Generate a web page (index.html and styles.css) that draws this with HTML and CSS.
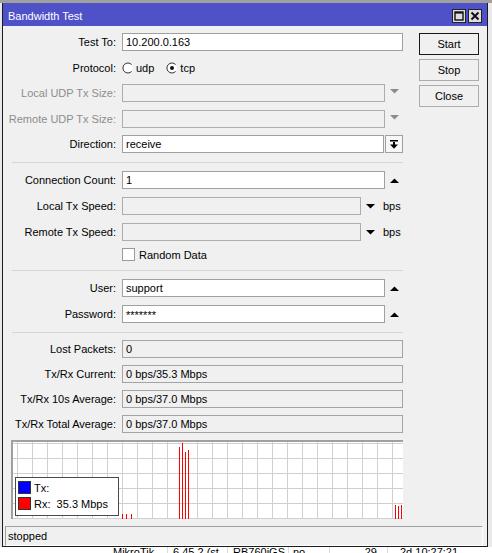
FILE: index.html
```html
<!DOCTYPE html>
<html>
<head>
<meta charset="utf-8">
<title>Bandwidth Test</title>
<link rel="stylesheet" href="styles.css">
</head>
<body>
<div class="screen">
  <div class="win">
    <div class="titlebar">
      <span class="title">Bandwidth Test</span>
      <div class="tbtns">
        <span class="tbtn"><svg width="12" height="12" viewBox="0 0 12 12"><rect x="2" y="2" width="8" height="8" fill="none" stroke="#111" stroke-width="1.4"/><rect x="2" y="2" width="8" height="1.6" fill="#111"/></svg></span>
        <span class="tbtn"><svg width="12" height="12" viewBox="0 0 12 12"><path d="M2.5 2.5 L9.5 9.5 M9.5 2.5 L2.5 9.5" stroke="#111" stroke-width="2"/></svg></span>
      </div>
    </div>
    <div class="body">
      <div class="main">
        <div class="form">
          <div class="row">
            <span class="lbl">Test To:</span>
            <span class="fld w281">10.200.0.163</span>
          </div>
          <div class="row g8">
            <span class="lbl">Protocol:</span>
            <span class="radio"><svg width="12" height="12" viewBox="0 0 12 12"><circle cx="6" cy="6" r="5" fill="#fff"/><path d="M9.6 2.6 A5 5 0 1 0 9.6 9.4" fill="none" stroke="#333" stroke-width="1"/></svg>udp</span>
            <span class="radio"><svg width="12" height="12" viewBox="0 0 12 12"><circle cx="6" cy="6" r="5" fill="#fff"/><path d="M9.6 2.6 A5 5 0 1 0 9.6 9.4" fill="none" stroke="#333" stroke-width="1"/><circle cx="6" cy="6" r="2" fill="#111"/></svg>tcp</span>
          </div>
          <div class="row g7">
            <span class="lbl dis">Local UDP Tx Size:</span>
            <span class="fld off w263"></span>
            <span class="slot up2"><svg width="9" height="5" viewBox="0 0 9 5"><path d="M0 0 L9 0 L4.5 4.5Z" fill="#8c8c8c"/></svg></span>
          </div>
          <div class="row g8">
            <span class="lbl dis">Remote UDP Tx Size:</span>
            <span class="fld off w263"></span>
            <span class="slot up2"><svg width="9" height="5" viewBox="0 0 9 5"><path d="M0 0 L9 0 L4.5 4.5Z" fill="#8c8c8c"/></svg></span>
          </div>
          <div class="row g7">
            <span class="lbl">Direction:</span>
            <span class="fld w262">receive</span>
            <span class="dbtn"><svg width="8" height="9" viewBox="0 0 8 9"><rect x="0" y="0" width="8" height="1.5" fill="#000"/><rect x="3" y="2" width="2" height="3" fill="#000"/><path d="M0 4.5 L8 4.5 L4 8.8Z" fill="#000"/></svg></span>
          </div>
          <div class="sep"></div>
          <div class="row">
            <span class="lbl">Connection Count:</span>
            <span class="fld w263">1</span>
            <span class="slot"><svg width="9" height="5" viewBox="0 0 9 5"><path d="M0 5 L9 5 L4.5 0.5Z" fill="#000"/></svg></span>
          </div>
          <div class="row g8">
            <span class="lbl">Local Tx Speed:</span>
            <span class="fld off w239"></span>
            <span class="slot s19"><svg width="9" height="5" viewBox="0 0 9 5"><path d="M0 0 L9 0 L4.5 4.5Z" fill="#000"/></svg></span>
            <span class="unit">bps</span>
          </div>
          <div class="row g8">
            <span class="lbl">Remote Tx Speed:</span>
            <span class="fld off w239"></span>
            <span class="slot s19"><svg width="9" height="5" viewBox="0 0 9 5"><path d="M0 0 L9 0 L4.5 4.5Z" fill="#000"/></svg></span>
            <span class="unit">bps</span>
          </div>
          <div class="row chkrow g7">
            <span class="lbl"></span>
            <span class="chk"></span>
            <span class="chktxt">Random Data</span>
          </div>
          <div class="sep"></div>
          <div class="row">
            <span class="lbl">User:</span>
            <span class="fld w263">support</span>
            <span class="slot"><svg width="9" height="5" viewBox="0 0 9 5"><path d="M0 5 L9 5 L4.5 0.5Z" fill="#000"/></svg></span>
          </div>
          <div class="row g8">
            <span class="lbl">Password:</span>
            <span class="fld w263 pw">*******</span>
            <span class="slot"><svg width="9" height="5" viewBox="0 0 9 5"><path d="M0 5 L9 5 L4.5 0.5Z" fill="#000"/></svg></span>
          </div>
          <div class="sep sep-b"></div>
          <div class="row">
            <span class="lbl">Lost Packets:</span>
            <span class="fld ro w281">0</span>
          </div>
          <div class="row g7">
            <span class="lbl">Tx/Rx Current:</span>
            <span class="fld ro w281">0 bps/35.3 Mbps</span>
          </div>
          <div class="row g7">
            <span class="lbl">Tx/Rx 10s Average:</span>
            <span class="fld ro w281">0 bps/37.0 Mbps</span>
          </div>
          <div class="row g7">
            <span class="lbl">Tx/Rx Total Average:</span>
            <span class="fld ro w281">0 bps/37.0 Mbps</span>
          </div>
        </div>
        <div class="btns">
          <span class="btn default">Start</span>
          <span class="btn">Stop</span>
          <span class="btn">Close</span>
        </div>
      </div>
      <div class="graph">
        <svg class="plot" width="390" height="77" viewBox="0 0 390 77">
          <g stroke="#d0d0d0" stroke-width="1">
            <path d="M4.5 0V77 M19.5 0V77 M34.5 0V77 M49.5 0V77 M64.5 0V77 M79.5 0V77 M94.5 0V77 M109.5 0V77 M124.5 0V77 M139.5 0V77 M154.5 0V77 M169.5 0V77 M184.5 0V77 M199.5 0V77 M214.5 0V77 M229.5 0V77 M244.5 0V77 M259.5 0V77 M274.5 0V77 M289.5 0V77 M304.5 0V77 M319.5 0V77 M334.5 0V77 M349.5 0V77 M364.5 0V77 M379.5 0V77"/>
            <path d="M0 1.5H390 M0 16.5H390 M0 31.5H390 M0 46.5H390 M0 61.5H390 M0 76.5H390"/>
          </g>
          <g stroke="#ff0000" stroke-width="1">
            <path d="M109.5 72V77 M113.5 72V77 M118.5 72V77"/>
            <path d="M166.5 5V77 M169.5 1V77 M172.5 10V77 M175.5 8V77"/>
            <path d="M382.5 63V77 M385.5 64V77 M388.5 63V77"/>
          </g>
        </svg>
        <div class="legend">
          <div class="lrow"><span class="sw blue"></span><span>Tx:</span></div>
          <div class="lrow"><span class="sw red"></span><span class="pre">Rx:  35.3 Mbps</span></div>
        </div>
      </div>
      <div class="status">stopped</div>
    </div>
  </div>
  <div class="bgrow">
    <span class="cell c0">MikroTik</span>
    <span class="cell c1">6.45.2 (st</span>
    <span class="cell c2">RB760iGS</span>
    <span class="cell c3">no</span>
    <span class="cell c4">29</span>
    <span class="cell c5">2d 10:27:21</span>
  </div>
</div>
</body>
</html>
```

FILE: styles.css
```css
* { box-sizing: border-box; }
html, body { margin: 0; padding: 0; }
body {
  width: 492px;
  height: 553px;
  overflow: hidden;
  background: #ececec;
  font-family: "Liberation Sans", Arial, sans-serif;
  font-size: 11px;
  color: #000;
}
.screen {
  height: 553px;
  padding-top: 3px;
  background: linear-gradient(to bottom, #a0a0a0 0, #a0a0a0 3px, #e9e9e9 3px);
}
.win {
  margin-left: 2px;
  width: 486px;
  border: 1px solid #1c1c1c;
  border-top: 0;
  background: #f0f0f0;
}
.titlebar {
  height: 23px;
  background: #4f51c9;
  color: #fff;
  display: flex;
  align-items: flex-start;
  padding: 0 5px 0 5px;
}
.title {
  font-size: 11px;
  line-height: 13px;
  margin-top: 7px;
}
.tbtns {
  margin-left: auto;
  margin-top: 6px;
  display: flex;
  gap: 2px;
}
.tbtn {
  width: 14px;
  height: 14px;
  border: 1px solid #222;
  background: #dedede;
  display: flex;
  align-items: center;
  justify-content: center;
}
.body {
  padding: 7px 0 0 0;
}
.main { display: flex; }
.form { width: 400px; flex: none; }
.row {
  display: flex;
  align-items: center;
  height: 18px;
}
.g7 { margin-top: 7px; }
.g8 { margin-top: 8px; }
.lbl {
  width: 113px;
  margin-right: 6px;
  text-align: right;
  white-space: nowrap;
  flex: none;
}
.dis { color: #8d8d8d; }
.fld {
  height: 18px;
  border: 1px solid #a0a0a0;
  background: #fff;
  padding: 0 3px;
  display: flex;
  align-items: center;
  flex: none;
  white-space: nowrap;
}
.w281 { width: 281px; }
.w263 { width: 263px; }
.w262 { width: 262px; }
.w239 { width: 239px; }
.off { background: #f0f0f0; border-color: #adadad; }
.ro { background: #f0f0f0; border-color: #a4a4a4; }
.pw { padding-left: 3px; padding-top: 2px; }
.slot {
  width: 18px;
  height: 18px;
  display: flex;
  align-items: center;
  justify-content: center;
  flex: none;
}
.slot svg { display: block; }
.up2 svg { margin-bottom: 4px; }
.s19 { width: 19px; }
.unit { margin-left: 3px; }
.dbtn {
  margin-left: 1px;
  width: 18px;
  height: 18px;
  border: 1px solid #a0a0a0;
  background: #f7f7f7;
  display: flex;
  align-items: center;
  justify-content: center;
  flex: none;
}
.dbtn svg { display: block; }
.radio {
  display: flex;
  align-items: center;
  gap: 2px;
  margin-right: 12px;
}
.radio svg { display: block; }
.chkrow { height: 13px; }
.chk {
  width: 13px;
  height: 13px;
  border: 1px solid #9a9a9a;
  background: #fff;
  flex: none;
}
.chktxt { margin-left: 4px; }
.sep {
  height: 1px;
  background: #d6d6d6;
  margin: 9px 0 8px 9px;
  width: 391px;
}
.sep-b { margin-bottom: 7px; }
.btns {
  margin-left: 16px;
  width: 60px;
  display: flex;
  flex-direction: column;
  gap: 4px;
  flex: none;
}
.btn {
  height: 22px;
  border: 1px solid #adadad;
  background: #f0f0f0;
  display: flex;
  align-items: center;
  justify-content: center;
}
.btn.default { border-color: #1a1a1a; }
.graph {
  position: relative;
  margin: 7px 0 0 8px;
  width: 392px;
  height: 79px;
  border-top: 2px solid #a0a0a0;
  border-left: 2px solid #a0a0a0;
  background: #fff;
}
.plot { display: block; }
.legend {
  position: absolute;
  left: 2px;
  top: 35px;
  width: 104px;
  height: 39px;
  border: 1px solid #4a4a4a;
  background: #fff;
  padding: 3px 2px;
  display: flex;
  flex-direction: column;
  gap: 3px;
}
.lrow {
  display: flex;
  align-items: center;
  height: 13px;
  gap: 3px;
}
.sw {
  width: 13px;
  height: 13px;
  border: 1px solid #333;
  flex: none;
}
.blue { background: #0000ff; }
.red { background: #ff0000; }
.pre { white-space: pre; }
.status {
  margin: 7px 0 0 2px;
  width: 478px;
  height: 20px;
  border: 1px solid;
  border-color: #a0a0a0 #fff #fff #a0a0a0;
  padding-left: 2px;
  display: flex;
  align-items: center;
}
.bgrow {
  display: flex;
  height: 7px;
  overflow: hidden;
  background: #fff;
}
.cell {
  flex: none;
  line-height: 13px;
  margin-top: -1px;
  height: 14px;
  border-right: 1px solid #dcdcdc;
  white-space: nowrap;
  overflow: hidden;
}
.c0 { width: 168px; padding-left: 113px; }
.c1 { width: 60px; padding-left: 5px; }
.c2 { width: 61px; padding-left: 5px; }
.c3 { width: 41px; padding-left: 4px; }
.c4 { width: 58px; text-align: right; padding-right: 10px; }
.c5 { width: 104px; padding-left: 12px; border-right: 0; }
```
